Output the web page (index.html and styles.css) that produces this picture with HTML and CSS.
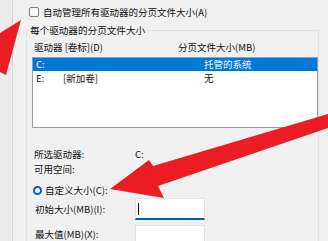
FILE: index.html
```html
<!DOCTYPE html>
<html lang="zh-CN">
<head>
    <meta charset="UTF-8">
    <meta name="viewport" content="width=device-width, initial-scale=1.0">
    <title>虚拟内存</title>
    <link rel="stylesheet" href="styles.css">
</head>
<body>
    <div class="window">
        <div class="edge"></div>
        <div class="dialog">
            <label class="auto"><span class="check"></span>自动管理所有驱动器的分页文件大小(A)</label>
            <fieldset class="group">
                <legend>每个驱动器的分页文件大小</legend>
                <div class="list-head"><span>驱动器 [卷标](D)</span><span>分页文件大小(MB)</span></div>
                <div class="list">
                    <div class="row selected"><span>C:</span><span></span><span>托管的系统</span></div>
                    <div class="row"><span>E:</span><span>[新加卷]</span><span>无</span></div>
                </div>
                <div class="info">
                    <span>所选驱动器:</span><span>C:</span>
                    <span>可用空间:</span><span></span>
                </div>
                <label class="radio"><span class="dot"></span>自定义大小(C):</label>
                <div class="field">
                    <span>初始大小(MB)(I):</span>
                    <div class="input focused"><span class="caret"></span></div>
                </div>
                <div class="field second">
                    <span class="top">最大值(MB)(X):</span>
                    <div class="input"></div>
                </div>
            </fieldset>
        </div>
        <svg class="arrows" width="328" height="241" viewBox="0 0 328 241">
            <polygon points="21,20 0,33 0,72 6,75"/>
            <polygon points="110,189 149,160 153,166 328,114 328,128 158,186 164,198"/>
        </svg>
    </div>
</body>
</html>
```

FILE: styles.css
```css
body {
    margin: 0;
    background-color: #f0f0f0;
    font-family: "Noto Sans CJK SC", "Noto Sans", sans-serif;
    font-size: 9.5px;
    color: #111;
}
.window {
    position: relative;
    display: flex;
    width: 328px;
    height: 241px;
    overflow: hidden;
}
.edge {
    width: 12px;
    flex-shrink: 0;
    background-color: #ebebeb;
    border-right: 1px solid #d5d5d5;
}
.dialog {
    flex: 1;
    display: flex;
    flex-direction: column;
}
.auto {
    display: flex;
    align-items: center;
    gap: 4px;
    height: 12px;
    line-height: 12px;
    margin-top: 6px;
    padding-left: 16px;
}
.check {
    width: 10px;
    height: 10px;
    box-sizing: border-box;
    border: 1px solid #7a7a7a;
    border-radius: 2px;
    background-color: #f7f7f7;
}
.group {
    box-sizing: border-box;
    width: 293px;
    margin: 6px 0 0 13px;
    padding: 0 0 0 5px;
    border: 1px solid #e0e0e0;
    min-inline-size: 0;
}
.group legend {
    margin-left: -3px;
    padding: 0 1px;
    font-size: 9.6px;
    line-height: 12px;
}
.list-head {
    display: grid;
    grid-template-columns: 144px 1fr;
    margin-top: 5px;
    padding-left: 2px;
    line-height: 12px;
}
.list {
    box-sizing: border-box;
    height: 71px;
    margin-top: 4px;
    background-color: #fff;
    border: 1px solid #9c9c9c;
}
.row {
    display: grid;
    grid-template-columns: 27px 141px 1fr;
    height: 14px;
    line-height: 14px;
    padding-left: 3px;
}
.row.selected {
    height: 13px;
    line-height: 13px;
    background-color: #0078d7;
    color: #fff;
}
.info {
    display: grid;
    grid-template-columns: 101px 1fr;
    margin-top: 19px;
    padding-left: 2px;
    line-height: 15px;
}
.radio {
    display: flex;
    align-items: center;
    gap: 3px;
    height: 12px;
    line-height: 12px;
    margin-top: 7px;
    padding-left: 1px;
}
.dot {
    width: 9px;
    height: 9px;
    box-sizing: border-box;
    border: 2.5px solid #005fb8;
    border-radius: 50%;
    background-color: #fff;
}
.field {
    display: grid;
    grid-template-columns: 100px 70px;
    align-items: center;
    margin-top: 2px;
    padding-left: 3px;
    line-height: 12px;
}
.field.second {
    margin-top: 5px;
}
.field .top {
    align-self: start;
    padding-top: 3px;
}
.input {
    box-sizing: border-box;
    display: flex;
    align-items: center;
    height: 22px;
    padding-left: 2px;
    background-color: #fff;
    border: 1px solid #e4e4e4;
    border-bottom-color: #8a8a8a;
}
.input.focused {
    border-bottom: 2px solid #005fb8;
}
.caret {
    width: 1px;
    height: 12px;
    background-color: #000;
}
.arrows {
    position: absolute;
    left: 0;
    top: 0;
    pointer-events: none;
    fill: #ec1c24;
}
```
